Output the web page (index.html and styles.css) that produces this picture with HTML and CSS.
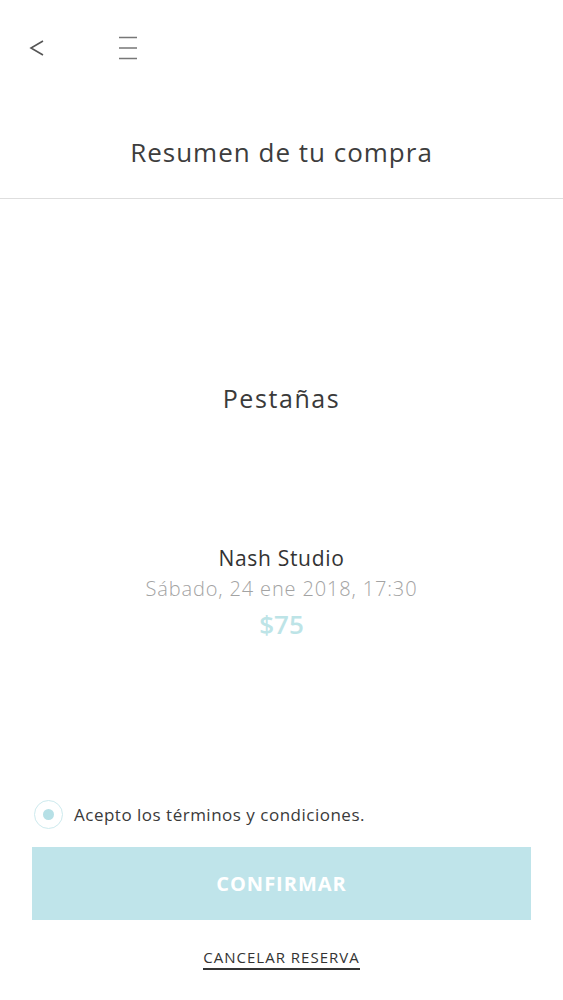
FILE: index.html
```html
<!DOCTYPE html>
<html lang="es">
<head>
  <meta charset="UTF-8" />
  <meta name="viewport" content="width=device-width, initial-scale=1.0"/>
  <title>Resumen de tu compra</title>
  <link rel="stylesheet" href="styles.css">
</head>
<body>

<div class="topbar">
  <span class="back">
    <svg width="16" height="18" viewBox="0 0 16 18"><path d="M14 2 L2 9 L14 16" fill="none" stroke="#555" stroke-width="1.6"/></svg>
  </span>
  <span class="menu">
    <svg width="20" height="24" viewBox="0 0 20 24"><path d="M1 1.5 H19 M1 12 H19 M1 22.5 H19" stroke="#777" stroke-width="1.4"/></svg>
  </span>
</div>

<div class="title">Resumen de tu compra</div>

<div class="summary">
  <h2 class="service">Pestañas</h2>
  <div class="details">
    <div class="studio">Nash Studio</div>
    <div class="date">Sábado, 24 ene 2018, 17:30</div>
    <div class="price">$75</div>
  </div>
</div>

<div class="footer">
  <label class="terms">
    <span class="radio"><span class="dot"></span></span>
    Acepto los términos y condiciones.
  </label>
  <button class="confirm">CONFIRMAR</button>
  <a class="cancel" href="#">CANCELAR RESERVA</a>
</div>

</body>
</html>
```

FILE: styles.css
```css
* { margin: 0; padding: 0; box-sizing: border-box; font-family: 'Open Sans', 'Liberation Sans', sans-serif; }
body, html { height: 100%; background: #fff; }
body { display: flex; flex-direction: column; color: #3c3c3c; }

.topbar {
  display: flex;
  align-items: center;
  height: 96px;
  padding: 0 0 0 29px;
  gap: 73px;
}
.back, .menu { display: flex; }

.title {
  text-align: center;
  font-size: 26px;
  letter-spacing: 1px;
  color: #3d3d3d;
  padding: 38px 0 28px;
  border-bottom: 1.5px solid #dedede;
}

.summary {
  display: flex;
  flex-direction: column;
  align-items: center;
}

.service {
  font-weight: 400;
  font-size: 25px;
  letter-spacing: 1.6px;
  color: #3a3a3a;
  margin-top: 182px;
}

.details {
  margin-top: 129px;
  text-align: center;
}
.studio { font-size: 21px; letter-spacing: 0.7px; color: #333; }
.date { font-size: 20px; letter-spacing: 0.85px; font-weight: 300; color: #a3a3a3; margin-top: 3px; }
.price { font-size: 26px; font-weight: 600; color: #bde4e7; margin-top: 4px; }

.footer {
  margin-top: auto;
  padding: 0 32px 30px;
  display: flex;
  flex-direction: column;
  align-items: center;
}

.terms {
  align-self: flex-start;
  display: flex;
  align-items: center;
  gap: 11px;
  font-size: 17px;
  letter-spacing: 0.5px;
  color: #3a3a3a;
  margin-left: 2px;
}
.radio {
  width: 29px;
  height: 29px;
  border-radius: 50%;
  border: 1.5px solid #cdeaee;
  display: flex;
  align-items: center;
  justify-content: center;
}
.dot {
  width: 11px;
  height: 11px;
  border-radius: 50%;
  background: #b6e0e6;
}

.confirm {
  width: 100%;
  height: 73px;
  margin-top: 18px;
  border: none;
  background: #bfe4ea;
  color: #fff;
  font-size: 20px;
  letter-spacing: 1px;
  font-weight: 700;
}

.cancel {
  margin-top: 27px;
  font-size: 15px;
  letter-spacing: 1px;
  color: #333;
  text-decoration: none;
  border-bottom: 2px solid #333;
  padding-bottom: 1px;
}
```
